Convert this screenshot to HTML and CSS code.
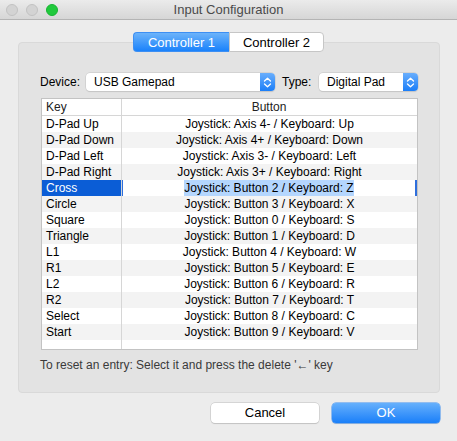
FILE: index.html
```html
<!DOCTYPE html>
<html lang="en">

<head>
    <meta charset="UTF-8">
    <meta name="viewport" content="width=device-width, initial-scale=1.0">
    <title>Input Configuration</title>
    <link rel="stylesheet" href="styles.css">
</head>

<body>
    <div class="window">
        <div class="titlebar">
            <div class="lights">
                <span class="light"></span>
                <span class="light"></span>
                <span class="light green"></span>
            </div>
            <div class="title">Input Configuration</div>
        </div>

        <div class="content">
            <div class="tabs">
                <span class="tab active">Controller 1</span>
                <span class="tab">Controller 2</span>
            </div>

            <div class="group">
                <div class="device_row">
                    <label>Device:</label>
                    <div class="popup device">
                        <span class="popup_text">USB Gamepad</span>
                        <span class="stepper">
                            <svg width="9" height="11" viewBox="0 0 9 11">
                                <path d="M1.5 4 L4.5 1.2 L7.5 4 M1.5 7 L4.5 9.8 L7.5 7" fill="none" stroke="#fff" stroke-width="1.3" stroke-linecap="round" stroke-linejoin="round"/>
                            </svg>
                        </span>
                    </div>
                    <label class="type_label">Type:</label>
                    <div class="popup type">
                        <span class="popup_text">Digital Pad</span>
                        <span class="stepper">
                            <svg width="9" height="11" viewBox="0 0 9 11">
                                <path d="M1.5 4 L4.5 1.2 L7.5 4 M1.5 7 L4.5 9.8 L7.5 7" fill="none" stroke="#fff" stroke-width="1.3" stroke-linecap="round" stroke-linejoin="round"/>
                            </svg>
                        </span>
                    </div>
                </div>

                <div class="table">
                    <div class="row head">
                        <div class="key">Key</div>
                        <div class="btn">Button</div>
                    </div>
                    <div class="row"><div class="key">D-Pad Up</div><div class="btn">Joystick: Axis 4- / Keyboard: Up</div></div>
                    <div class="row"><div class="key">D-Pad Down</div><div class="btn">Joystick: Axis 4+ / Keyboard: Down</div></div>
                    <div class="row"><div class="key">D-Pad Left</div><div class="btn">Joystick: Axis 3- / Keyboard: Left</div></div>
                    <div class="row"><div class="key">D-Pad Right</div><div class="btn">Joystick: Axis 3+ / Keyboard: Right</div></div>
                    <div class="row selected"><div class="key">Cross</div><div class="btn"><span class="sel_text">Joystick: Button 2 / Keyboard: Z</span></div></div>
                    <div class="row"><div class="key">Circle</div><div class="btn">Joystick: Button 3 / Keyboard: X</div></div>
                    <div class="row"><div class="key">Square</div><div class="btn">Joystick: Button 0 / Keyboard: S</div></div>
                    <div class="row"><div class="key">Triangle</div><div class="btn">Joystick: Button 1 / Keyboard: D</div></div>
                    <div class="row"><div class="key">L1</div><div class="btn">Joystick: Button 4 / Keyboard: W</div></div>
                    <div class="row"><div class="key">R1</div><div class="btn">Joystick: Button 5 / Keyboard: E</div></div>
                    <div class="row"><div class="key">L2</div><div class="btn">Joystick: Button 6 / Keyboard: R</div></div>
                    <div class="row"><div class="key">R2</div><div class="btn">Joystick: Button 7 / Keyboard: T</div></div>
                    <div class="row"><div class="key">Select</div><div class="btn">Joystick: Button 8 / Keyboard: C</div></div>
                    <div class="row"><div class="key">Start</div><div class="btn">Joystick: Button 9 / Keyboard: V</div></div>
                    <div class="row empty"><div class="key"></div><div class="btn"></div></div>
                </div>

                <p class="hint">To reset an entry: Select it and press the delete '&larr;' key</p>
            </div>

            <div class="buttons">
                <span class="button">Cancel</span>
                <span class="button primary">OK</span>
            </div>
        </div>
    </div>
</body>

</html>
```

FILE: styles.css
```css
* {
    margin: 0;
    padding: 0;
    box-sizing: border-box;
}

body {
    width: 457px;
    height: 441px;
    background: #ececec;
    font-family: "Liberation Sans", Arial, sans-serif;
    color: #000;
    overflow: hidden;
}

.titlebar {
    height: 20px;
    background: linear-gradient(#ebebeb, #d6d6d6);
    border-bottom: 1px solid #b4b4b4;
    display: flex;
    align-items: center;
    position: relative;
}

.lights {
    display: flex;
    gap: 8px;
    padding-left: 6px;
}

.light {
    width: 12px;
    height: 12px;
    border-radius: 50%;
    background: #d3d3d3;
    border: 1px solid #c2c2c2;
}

.light.green {
    background: #20c93c;
    border-color: #17b532;
}

.title {
    position: absolute;
    left: 0;
    right: 0;
    text-align: center;
    font-size: 13px;
    color: #4a4a4a;
    line-height: 20px;
}

.content {
    padding: 12px 17px 0 18px;
}

.tabs {
    display: flex;
    justify-content: center;
    margin-bottom: -10px;
    position: relative;
    z-index: 1;
    padding-right: 1px;
}

.tab {
    width: 96px;
    height: 20px;
    line-height: 19px;
    text-align: center;
    font-size: 13px;
    background: #fff;
    border: 1px solid #c6c6c6;
    color: #000;
}

.tab:first-child {
    border-radius: 4px 0 0 4px;
    border-right: none;
}

.tab:last-child {
    border-radius: 0 4px 4px 0;
    width: 95px;
}

.tab.active {
    background: linear-gradient(#6cb3fa, #1a82fb);
    border-color: #3d8ff3;
    color: #fff;
}

.group {
    background: #e3e3e3;
    border: 1px solid #d9d9d9;
    border-radius: 4px;
    padding: 30px 21px 0 22px;
    height: 351px;
}

.device_row {
    display: flex;
    align-items: center;
    height: 18px;
    font-size: 12px;
}

.device_row label {
    width: 46px;
    margin-left: -1px;
}

.device_row .type_label {
    width: 37px;
    margin-left: 7px;
}

.popup {
    height: 18px;
    background: #fff;
    border-radius: 4px;
    box-shadow: 0 0 0 0.5px #c4c4c4, 0 1px 1px rgba(0, 0, 0, 0.12);
    display: flex;
    align-items: center;
}

.popup.device {
    width: 189px;
}

.popup.type {
    width: 99px;
}

.popup_text {
    flex: 1;
    padding-left: 8px;
}

.stepper {
    width: 15px;
    height: 18px;
    border-radius: 0 4px 4px 0;
    background: linear-gradient(#69aefc, #1b7ef8);
    display: flex;
    align-items: center;
    justify-content: center;
}

.table {
    margin-top: 7px;
    background: #fff;
    border: 1px solid #c3c3c3;
    font-size: 12px;
}

.row {
    display: flex;
    height: 16px;
    line-height: 16px;
}

.row:nth-child(odd) {
    background: #f3f3f3;
}

.row .key {
    width: 80px;
    padding-left: 4px;
    border-right: 1px solid #d6d6d6;
    white-space: nowrap;
}

.row .btn {
    flex: 1;
    text-align: center;
    white-space: nowrap;
}

.row.head {
    background: #fff;
    height: 17px;
    border-bottom: 1px solid #d6d6d6;
    color: #222;
}

.row.head .btn {
    padding-right: 1px;
}

.row.selected .key {
    background: #0b5dd6;
    color: #fff;
}

.row.selected .btn {
    background: #fff;
    border-left: 1px solid #2f6fdc;
    border-right: 2px solid #2f6fdc;
}

.sel_text {
    background: #b4d6fe;
    padding: 1px 0;
}

.row.empty {
    height: 9px;
    background: #fff;
}

.hint {
    font-size: 12px;
    color: #3a3a3a;
    margin-top: 8px;
    margin-left: -1px;
}

.buttons {
    display: flex;
    justify-content: flex-end;
    gap: 13px;
    margin-top: 10px;
}

.button {
    width: 108px;
    height: 20px;
    line-height: 20px;
    text-align: center;
    font-size: 13px;
    background: #fff;
    border-radius: 4px;
    box-shadow: 0 0 0 0.5px #bdbdbd, 0 1px 1px rgba(0, 0, 0, 0.15);
}

.button.primary {
    background: linear-gradient(#66b0fc, #1a7ff9);
    box-shadow: 0 0 0 0.5px #3b8ef2, 0 1px 1px rgba(0, 0, 0, 0.15);
    color: #fff;
}
```
